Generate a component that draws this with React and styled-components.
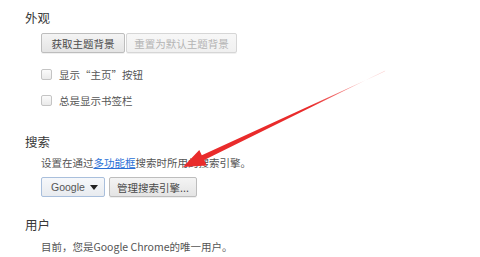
import React from 'react'
import styled, { createGlobalStyle } from 'styled-components'

const GlobalStyle = createGlobalStyle`
  html, body {
    margin: 0;
    padding: 0;
    background: #fff;
  }
  body {
    font-family: "Noto Sans CJK SC", "Liberation Sans", sans-serif;
    color: #444;
  }
`

const Page = styled.div`
  position: relative;
  width: 480px;
  height: 257px;
  overflow: hidden;
  padding: 10px 0 0 25px;
  box-sizing: border-box;
`

const Heading = styled.div`
  font-size: 12.5px;
  line-height: 16px;
  height: 16px;
  color: #383838;
  margin-top: ${p => p.$top || 0}px;
`

const Body = styled.div`
  padding-left: 16px;
  margin-top: ${p => p.$top || 0}px;
`

const Row = styled.div`
  display: flex;
  align-items: center;
  gap: ${p => p.$gap || 0}px;
  height: 20px;
  margin-top: ${p => p.$top || 0}px;
`

const Button = styled.div`
  box-sizing: border-box;
  width: ${p => p.$w}px;
  height: 20px;
  display: flex;
  align-items: center;
  justify-content: center;
  font-size: 10.5px;
  color: ${p => (p.$disabled ? '#b4b4b4' : '#4a4a4a')};
  border: 1px solid ${p => (p.$disabled ? '#d6d6d6' : '#bdbdbd')};
  border-radius: 2px;
  background: ${p => (p.$disabled ? 'linear-gradient(#f7f7f7, #f0f0f0)' : 'linear-gradient(#f4f4f4, #e4e4e4)')};
  box-shadow: 0 1px 0 rgba(0, 0, 0, 0.06);
`

const Select = styled.div`
  box-sizing: border-box;
  width: 64px;
  height: 20px;
  display: flex;
  align-items: center;
  justify-content: space-between;
  padding: 0 6px 0 9px;
  font-size: 10.5px;
  font-family: "Liberation Sans", "Noto Sans CJK SC", sans-serif;
  color: #555;
  border: 1px solid #a9bfdc;
  border-radius: 2px;
  background: linear-gradient(#f6f8fb, #e8ebef);
`

const Caret = styled.span`
  width: 0;
  height: 0;
  border-left: 4px solid transparent;
  border-right: 4px solid transparent;
  border-top: 5px solid #222;
`

const Box = styled.span`
  box-sizing: border-box;
  width: 11px;
  height: 11px;
  border: 1px solid #c4c4c4;
  border-radius: 2px;
  background: linear-gradient(#fbfbfb, #eaeaea);
`

const Label = styled.span`
  font-size: 10.5px;
  color: #555;
`

const Text = styled.div`
  font-size: 10.5px;
  line-height: 16px;
  color: #555;
  margin-top: ${p => p.$top || 0}px;
`

const Link = styled.span`
  color: #2a6fd6;
  text-decoration: underline;
`

const Arrow = styled.svg`
  position: absolute;
  left: 0;
  top: 0;
  pointer-events: none;
`

function CheckRow({ label, top }) {
  return (
    <Row $gap={7} $top={top}>
      <Box />
      <Label>{label}</Label>
    </Row>
  )
}

export default function App() {
  return (
    <>
      <GlobalStyle />
      <Page>
        <Heading>外观</Heading>
        <Body $top={7}>
          <Row $gap={1}>
            <Button $w={84}>获取主题背景</Button>
            <Button $w={111} $disabled>重置为默认主题背景</Button>
          </Row>
          <CheckRow label="显示“主页”按钮" top={11} />
          <CheckRow label="总是显示书签栏" top={6} />
        </Body>

        <Heading $top={24}>搜索</Heading>
        <Body $top={5}>
          <Text>设置在通过<Link>多功能框</Link>搜索时所用的搜索引擎。</Text>
          <Row $gap={4} $top={6}>
            <Select>Google<Caret /></Select>
            <Button $w={88}>管理搜索引擎...</Button>
          </Row>
        </Body>

        <Heading $top={20}>用户</Heading>
        <Body $top={6}>
          <Text>目前，您是Google Chrome的唯一用户。</Text>
        </Body>

        <Arrow width="480" height="257" viewBox="0 0 480 257">
          <defs>
            <linearGradient id="fade" x1="385" y1="71" x2="310" y2="106" gradientUnits="userSpaceOnUse">
              <stop offset="0" stopColor="#f05050" stopOpacity="0.25" />
              <stop offset="1" stopColor="#e92b2b" stopOpacity="1" />
            </linearGradient>
          </defs>
          <polygon
            points="385.3,70.6 204.2,160.1 206.8,165.4 183,167 199.3,149.9 201.8,155.2 384.7,71.4"
            fill="url(#fade)"
          />
        </Arrow>
      </Page>
    </>
  )
}
